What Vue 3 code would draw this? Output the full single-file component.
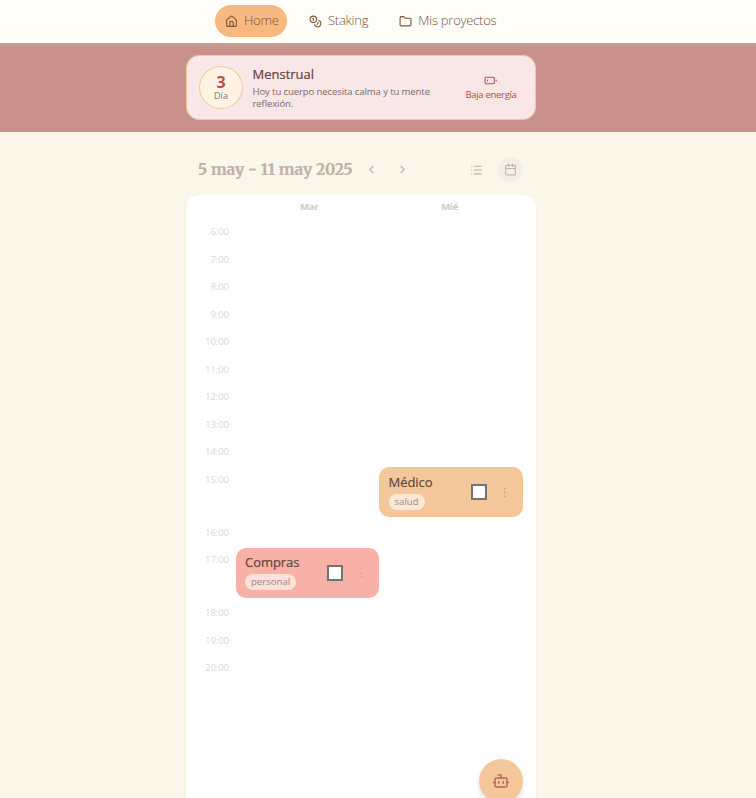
<script setup>
const nav = [
  { label: 'Home', icon: 'home', active: true },
  { label: 'Staking', icon: 'coins' },
  { label: 'Mis proyectos', icon: 'folder' },
]
const events = {
  15: { title: 'Médico', tag: 'salud', kind: 'salud', day: 1 },
  17: { title: 'Compras', tag: 'personal', kind: 'personal', day: 0 },
}
const hours = Array.from({ length: 15 }, (_, i) => ({ hour: i + 6, event: events[i + 6] }))
</script>

<template>
  <div class="page">
    <nav class="nav">
      <a v-for="item in nav" :key="item.label" class="nav-item" :class="[item.icon, { active: item.active }]">
        <svg v-if="item.icon === 'home'" class="icon" viewBox="0 0 24 24">
          <path d="M15 21v-8a1 1 0 0 0-1-1h-4a1 1 0 0 0-1 1v8" />
          <path d="M3 10a2 2 0 0 1 .7-1.5l7-6a2 2 0 0 1 2.6 0l7 6A2 2 0 0 1 21 10v9a2 2 0 0 1-2 2H5a2 2 0 0 1-2-2z" />
        </svg>
        <svg v-else-if="item.icon === 'coins'" class="icon" viewBox="0 0 24 24">
          <circle cx="8" cy="8" r="6" />
          <path d="M18.09 10.37A6 6 0 1 1 10.34 18M7 6h1v4M16.71 13.88l.7.71-2.82 2.82" />
        </svg>
        <svg v-else class="icon" viewBox="0 0 24 24">
          <path d="M20 20a2 2 0 0 0 2-2V8a2 2 0 0 0-2-2h-7.9a2 2 0 0 1-1.7-.9l-.8-1.2A2 2 0 0 0 7.9 3H4a2 2 0 0 0-2 2v13a2 2 0 0 0 2 2Z" />
        </svg>
        <span>{{ item.label }}</span>
      </a>
    </nav>

    <header class="band">
      <section class="phase">
        <div class="day">
          <strong>3</strong>
          <span>Día</span>
        </div>
        <div class="phase-text">
          <h2>Menstrual</h2>
          <p>Hoy tu cuerpo necesita calma y tu mente reflexión.</p>
        </div>
        <div class="energy">
          <svg class="icon" viewBox="0 0 24 24">
            <rect x="2" y="6" width="17" height="12" rx="2" />
            <path d="M22.5 11v2M6.5 11v2" />
          </svg>
          <span>Baja energía</span>
        </div>
      </section>
    </header>

    <main class="main">
      <div class="toolbar">
        <h1>5 may - 11 may 2025</h1>
        <button class="tool prev"><svg class="icon" viewBox="0 0 24 24"><path d="m15 18-6-6 6-6" /></svg></button>
        <button class="tool next"><svg class="icon" viewBox="0 0 24 24"><path d="m9 18 6-6-6-6" /></svg></button>
        <button class="tool list"><svg class="icon" viewBox="0 0 24 24"><path d="M3 6h.01M3 13h.01M3 20h.01M8 6h13M8 13h13M8 20h13" /></svg></button>
        <button class="tool selected">
          <svg class="icon" viewBox="0 0 24 24"><rect x="3" y="4" width="18" height="18" rx="2" /><path d="M8 2v4M16 2v4M3 10h18" /></svg>
        </button>
      </div>

      <section class="calendar">
        <div class="days"><span>Mar</span><span>Mié</span></div>
        <div v-for="row in hours" :key="row.hour" class="row" :class="{ busy: row.event }">
          <time>{{ row.hour }}:00</time>
          <div v-for="day in 2" :key="day" class="cell">
            <article v-if="row.event && row.event.day === day - 1" class="event" :class="row.event.kind">
              <div class="event-text">
                <h3>{{ row.event.title }}</h3>
                <span class="tag">{{ row.event.tag }}</span>
              </div>
              <span class="check"></span>
              <svg class="more" viewBox="0 0 24 24"><circle cx="12" cy="5" r="1" /><circle cx="12" cy="12" r="1" /><circle cx="12" cy="19" r="1" /></svg>
            </article>
          </div>
        </div>
      </section>
    </main>

    <button class="bot">
      <svg class="icon" viewBox="0 0 24 24">
        <path d="M12 8V4H8M2 14h2M20 14h2M15 13v2M9 13v2" />
        <rect x="4" y="8" width="16" height="12" rx="2" />
      </svg>
    </button>
  </div>
</template>

<style>
body { overflow: hidden; background: #faf6e9; }
</style>

<style scoped>
* { box-sizing: border-box; margin: 0; }
.page {
  position: relative;
  height: 798px;
  overflow: hidden;
  display: flex;
  flex-direction: column;
  background: #faf6e9;
  font-family: "Open Sans", "Noto Sans", sans-serif;
}
.icon { fill: none; stroke: currentColor; stroke-width: 2; stroke-linecap: round; stroke-linejoin: round; flex: none; }
button { border: 0; padding: 0; background: none; }
.nav {
  flex: none;
  height: 43px;
  padding: 5px 0 6px 215px;
  display: flex;
  gap: 12px;
  background: #fffdf8;
}
.nav-item {
  height: 32px;
  padding: 0 10px;
  display: flex;
  align-items: center;
  gap: 6px;
  border-radius: 16px;
  color: #7a5534;
  font-size: 13px;
  font-weight: 300;
  line-height: 20px;
  letter-spacing: -0.25px;
}
.nav-item .icon { width: 13px; height: 13px; }
.nav-item span { position: relative; top: -1px; }
.nav-item.active { width: 72px; background: #f7b980; }
.nav-item.folder { margin-left: -1px; }
.band {
  flex: none;
  height: 89px;
  padding: 12px 220px 0 186px;
  background: linear-gradient(#cf9b94, #ca918c 6px);
}
.phase {
  height: 65px;
  padding: 0 12px;
  display: flex;
  align-items: center;
  border: 1px solid #f4c79a;
  border-radius: 13px;
  background: #f7e7e7;
}
.day {
  flex: none;
  width: 44px;
  height: 43px;
  margin-top: -1px;
  padding-top: 7px;
  display: flex;
  flex-direction: column;
  align-items: center;
  border: 1px solid #f4c79a;
  border-radius: 50%;
  background: #fff4e4;
}
.day strong { color: #b25056; font-size: 16px; line-height: 16px; }
.day span { color: #8b766d; font-size: 9.2px; line-height: 12px; }
.phase-text { width: 200px; margin: 0 0 0 9.5px; }
.phase-text h2 { color: #703c41; font-size: 13px; font-weight: 500; line-height: 19px; -webkit-text-stroke: 0.2px; }
.phase-text p { margin-top: 2px; color: #806c62; font-size: 9.6px; line-height: 12px; letter-spacing: -0.13px; }
.energy {
  flex: none;
  width: 63px;
  margin-left: 7px;
  display: flex;
  flex-direction: column;
  align-items: center;
  gap: 2px;
  color: #b25056;
}
.energy .icon { width: 13px; height: 13px; margin-right: 1px; }
.energy span { padding: 0 6px; border-radius: 6px; background: #fbe6e3; font-size: 9.6px; line-height: 12px; letter-spacing: -0.35px; white-space: nowrap; }
.main { flex: 1; padding: 24px 220px 0 186px; display: flex; flex-direction: column; }
.toolbar { flex: none; height: 39px; padding: 0 13px 12px 12px; display: flex; align-items: center; color: #c2afa6; }
.toolbar h1 {
  width: 155px;
  font-family: "Merriweather", "DejaVu Serif Condensed", "DejaVu Serif", serif;
  font-size: 15.6px;
  font-weight: 700;
  line-height: 20px;
  letter-spacing: 0.04px;
  white-space: nowrap;
  -webkit-text-stroke: 0.2px;
}
.tool { flex: none; width: 25px; height: 25px; display: flex; align-items: center; justify-content: center; border-radius: 50%; color: inherit; }
.tool .icon { width: 13px; height: 13px; }
.prev { margin-left: 6px; }
.next { margin-left: 5.5px; }
.list { margin-left: auto; margin-right: 9px; }
.selected { background: #f5eee4; }
.calendar {
  flex: 1;
  padding: 5px 13px 0 12px;
  border-radius: 13px 13px 0 0;
  background: #fff;
  box-shadow: 0 1px 2px #00000015;
}
.days { height: 18px; padding: 0 3px 0 41px; display: grid; grid-template-columns: 1fr 1fr; text-align: center; color: #d4c7c8; font-size: 9.6px; font-weight: 700; line-height: 14px; letter-spacing: -0.2px; }
.row { height: 27.5px; display: grid; grid-template-columns: 37.5px 143.5px 144px; }
.row.busy { height: 53px; }
.row time { padding-right: 6.5px; color: #dbd6d6; font-size: 9.6px; line-height: 28px; letter-spacing: -0.1px; text-align: right; }
.cell { padding-top: 1.5px; }
.event { height: 50px; padding: 0 12px 0 9.5px; display: flex; align-items: center; border-radius: 10px; }
.event.salud { background: #f4c79b; }
.event.personal { padding-right: 11.5px; background: #f7b1a6; }
.event-text { flex: 1; margin-top: -2px; display: flex; flex-direction: column; align-items: flex-start; }
.event h3 { color: #5f493d; font-size: 13px; font-weight: 500; line-height: 19px; letter-spacing: -0.05px; -webkit-text-stroke: 0.2px; }
.tag { margin-top: 2px; padding: 0 6px; border-radius: 8px; background: #ffffff99; color: #9d8780; font-size: 9.6px; line-height: 16px; }
.check { width: 16px; height: 16px; border: 2px solid #737373; background: #fff; }
.more { width: 13px; height: 13px; margin-left: 11px; fill: #b8a08c; stroke: #b8a08c; stroke-width: 1; }
.personal .more { margin-left: 11.5px; fill: #cf9c8c; stroke: #cf9c8c; }
.bot {
  position: absolute;
  left: 479px;
  top: 759px;
  width: 44px;
  height: 44px;
  display: flex;
  align-items: center;
  justify-content: center;
  border-radius: 50%;
  background: #f4c79b;
  color: #bc6260;
  box-shadow: 0 4px 6px #0000001a;
}
.bot .icon { width: 18px; height: 18px; margin: -1px 1px 0 0; }
</style>
